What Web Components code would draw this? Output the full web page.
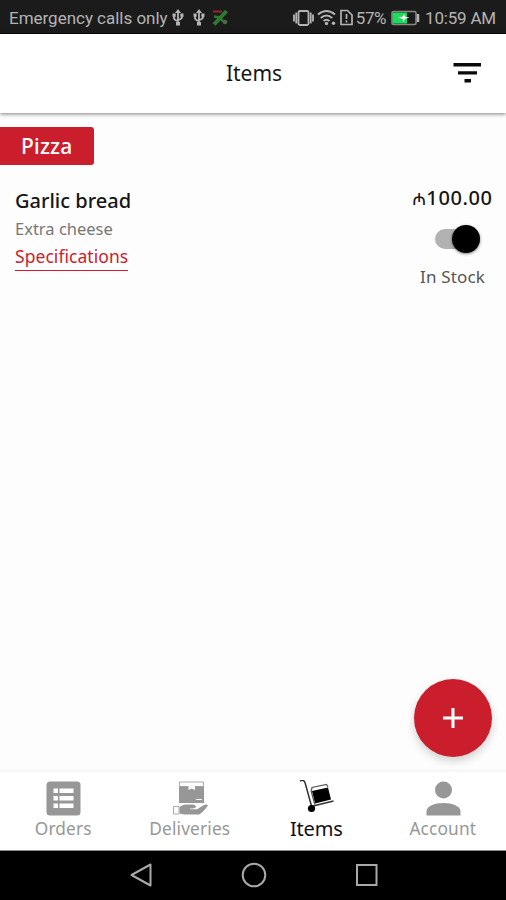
<!DOCTYPE html>
<html lang="en">
<head>
<meta charset="utf-8">
<title>Items</title>
<style>
	html, body{
		margin: 0;
		height: 100%;
	}
	body{
		overflow: hidden;
		background: #fdfdfd;
		font-family: "Noto Sans", "Open Sans", sans-serif;
	}
</style>
</head>
<body>
<items-app></items-app>
<script>
(function () {
	function define(name, html){
		const template = document.createElement("template");
		template.innerHTML = html;
		window.customElements.define(name, class extends HTMLElement{
			constructor(){
				super()
				this.attachShadow({ mode: "open" });
				this.shadowRoot.appendChild(template.content.cloneNode(true));
			}
		});
	}

	define("status-bar", `
		<style>
			:host{
				display: flex;
				align-items: center;
				justify-content: space-between;
				box-sizing: border-box;
				height: 34px;
				padding: 2px 10px 0 9px;
				background: #1b1b1b;
				border-bottom: 1px solid #050505;
				color: #b4b4b4;
				font: 17px/30px Roboto, sans-serif;
				white-space: nowrap;
			}
			div{
				display: flex;
				align-items: center;
			}
			svg{
				display: block;
				flex: none;
				fill: none;
				stroke: #b4b4b4;
			}
			.carrier{ letter-spacing: -0.02px; }
			.usb{ margin-left: 4px; }
			.usb + .usb{ margin-left: 9px; }
			.tool{ margin-left: 6px; }
			.percent{ margin: 0 5px 0 3px; letter-spacing: -0.4px; }
			.clock{ margin-left: 5px; letter-spacing: -0.2px; }
		</style>
		<div>
			<span class="carrier">Emergency calls only</span>
			<svg class="usb" width="12" height="17" viewBox="0 0 12 17" stroke-width="1.8"><path d="M6 2v13M2 6v3q0 2 4 3M10 6v2q0 2-4 3"/><path d="M6 0l3 4H3zM0.500 4.500h3.200v3.300H0.500zM8.300 4.500h3.200v3.300H8.300zM4 13h4v3.500H4z" fill="#b4b4b4" stroke="none"/></svg>
			<svg class="usb" width="12" height="17" viewBox="0 0 12 17" stroke-width="1.8"><path d="M6 2v13M2 6v3q0 2 4 3M10 6v2q0 2-4 3"/><path d="M6 0l3 4H3zM0.500 4.500h3.200v3.300H0.500zM8.300 4.500h3.200v3.300H8.300zM4 13h4v3.500H4z" fill="#b4b4b4" stroke="none"/></svg>
			<svg class="tool" width="18" height="18" viewBox="0 0 18 18"><path d="M2 2.500h9" stroke="#8e2424" stroke-width="2.200"/><path d="M15.500 2L3 15.500" stroke="#2f7a32" stroke-width="4"/><path d="M3 7.500l6 1 3 4" stroke="#2f7a32" stroke-width="2.500"/><circle cx="14" cy="13" r="2.300" fill="#4c6a4a" stroke="none"/></svg>
		</div>
		<div>
			<svg width="21" height="18" viewBox="0 0 21 18" stroke-width="1.800"><rect x="5.500" y="2" width="10" height="14" rx="1.500"/><path d="M1 5.500v7M3.300 3.500v11M17.700 3.500v11M20 5.500v7"/></svg>
			<svg style="margin-left:3px" width="20" height="17" viewBox="0 0 20 17" stroke-width="2"><path d="M1 5.500q8.500-7 17 0M3.800 9q5.700-5 11.400 0M6.500 12q3-2.500 6 0"/><circle cx="9.500" cy="14.500" r="1.700" fill="#b4b4b4" stroke="none"/><circle cx="16.500" cy="14.300" r="1.700" fill="#b4b4b4" stroke="none"/></svg>
			<svg style="margin-left:3px" width="13" height="17" viewBox="0 0 13 17" stroke-width="1.700"><path d="M1 1.500h6.500l4.500 4.500v9.500H1zM6.500 5v5M6.500 11.500v2"/></svg>
			<span class="percent">57%</span>
			<svg width="29" height="16" viewBox="0 0 29 16"><rect x="1" y="1.500" width="24" height="13" rx="1.500" stroke="#888" stroke-width="1.600"/><path d="M1.500 2.500H16v11H1.500z" fill="#20d95c" stroke="none"/><path d="M27 4v8" stroke-width="2.500"/><path d="M7 7.500l4.500-.8L13 4l1.200 2.700 4.300 1.100-4.500 1L12.500 12l-1-3.200z" fill="#fff" stroke="none"/></svg>
			<span class="clock">10:59 AM</span>
		</div>
	`);

	define("app-header", `
		<style>
			:host{
				display: grid;
				grid-template-columns: 1fr auto 1fr;
				align-items: center;
				box-sizing: border-box;
				height: 79px;
				padding: 0 24px 2px 26px;
				background: #fff;
				box-shadow: 0 1px 4px rgba(0, 0, 0, 0.5);
				color: #161616;
				font-size: 21px;
				line-height: 30px;
				z-index: 1;
			}
			.title{ grid-column: 2; }
			svg{
				display: block;
				justify-self: end;
			}
		</style>
		<span class="title"><slot></slot></span>
		<svg width="29" height="20" viewBox="0 0 29 20"><path d="M0.500 0h27.500v3.500H0.500zM5 8.300h19v3.200H5zM11.500 16h6.500v3.500h-6.500z" fill="#0a0a0a"/></svg>
	`);

	define("category-tag", `
		<style>
			:host{
				display: block;
				box-sizing: border-box;
				width: 94px;
				height: 38px;
				padding-left: 21px;
				background: #cb1e2d;
				border-radius: 0 3px 3px 0;
				color: #fff;
				font-size: 21px;
				font-weight: 500;
				line-height: 38px;
				letter-spacing: 0.2px;
			}
		</style>
		<slot></slot>
	`);

	define("stock-switch", `
		<style>
			:host{
				display: flex;
				align-items: center;
				justify-content: flex-end;
				box-sizing: border-box;
				width: 45px;
				height: 20px;
				border-radius: 10px;
				background: #b2b2b2;
			}
			span{
				width: 28px;
				height: 28px;
				flex: none;
				border-radius: 50%;
				background: #000;
				box-shadow: 0 1px 3px rgba(0, 0, 0, 0.5);
			}
		</style>
		<span></span>
	`);

	define("menu-item", `
		<style>
			:host{
				display: flex;
				justify-content: space-between;
				padding: 18px 14px 0 15px;
			}
			.info, .side{
				display: flex;
				flex-direction: column;
				align-items: flex-start;
			}
			.name{
				margin-top: 4px;
				color: #161616;
				font-size: 20px;
				font-weight: 500;
				line-height: 28px;
			}
			.note{
				margin-top: 1px;
				color: #777;
				font-size: 16.5px;
				line-height: 26px;
			}
			.specs{
				height: 26px;
				margin-top: 2px;
				border-bottom: 1px solid #cb1e2d;
				color: #cb1e2d;
				font-size: 17.5px;
				line-height: 24px;
				letter-spacing: 0.05px;
			}
			.side{ align-items: flex-end; }
			.price{
				margin-top: 1px;
				color: #161616;
				font-size: 20px;
				font-weight: 500;
				line-height: 28px;
				letter-spacing: 0.6px;
				margin-right: -0.6px;
			}
			.price small{ font-size: 16px; }
			stock-switch{ margin: 16px 12px 0 0; }
			.stock{
				margin: 15px 7px 0 0;
				color: #555;
				font-size: 17px;
				line-height: 26px;
				letter-spacing: 0.15px;
			}
		</style>
		<div class="info">
			<span class="name"><slot name="name"></slot></span>
			<span class="note"><slot name="note"></slot></span>
			<span class="specs">Specifications</span>
		</div>
		<div class="side">
			<span class="price"><small>₼</small><slot name="price"></slot></span>
			<stock-switch></stock-switch>
			<span class="stock">In Stock</span>
		</div>
	`);

	define("add-button", `
		<style>
			:host{
				display: flex;
				align-items: center;
				justify-content: center;
				width: 78px;
				height: 78px;
				border-radius: 50%;
				background: #cb1e2d;
				box-shadow: 0 4px 9px rgba(0, 0, 0, 0.18);
			}
		</style>
		<svg width="20" height="20" viewBox="0 0 20 20"><path d="M10 0v20M0 10h20" stroke="#fff" stroke-width="3"/></svg>
	`);

	define("nav-tab", `
		<style>
			:host{
				display: flex;
				flex: 1 1 0;
				flex-direction: column;
				align-items: center;
				color: #979797;
				font-size: 17.3px;
				line-height: 26px;
				letter-spacing: 0.15px;
			}
			:host([active]){
				color: #111;
				font-size: 20px;
				letter-spacing: -0.2px;
			}
			.icon{
				height: 36px;
				margin-top: 8px;
			}
		</style>
		<span class="icon"><slot name="icon"></slot></span>
		<span class="label"><slot></slot></span>
	`);

	define("tab-bar", `
		<style>
			:host{
				display: flex;
				box-sizing: border-box;
				height: 82px;
				background: #fff;
				border-top: 3px solid #f7f7f7;
				border-bottom: 1px solid #8a8a8a;
			}
			svg{ display: block; }
		</style>
		<nav-tab>
			<svg slot="icon" width="36" height="36" viewBox="0 0 36 36"><rect x="1.500" y="1.500" width="34" height="34" rx="3.500" fill="#979797"/><path d="M8.500 8.500h4.500v4.500H8.500zM14.500 8.500h14v4.500h-14zM8.500 16h4.500v4.500H8.500zM14.500 16h14v4.500h-14zM8.500 23.500h4.500V28H8.500zM14.500 23.500h14V28h-14z" fill="#fff"/></svg>
			Orders
		</nav-tab>
		<nav-tab>
			<svg slot="icon" width="36" height="36" viewBox="0 0 36 36"><path d="M7.500 2h24v4.500h-24z" fill="#fff" stroke="#aaa"/><path d="M7 6.500h25V23H7z" fill="#979797"/><path d="M16.500 6h6.500v4l-3.200-1.500-3.300 1.500z" fill="#fff"/><path d="M24 19.500h6" stroke="#fff"/><path d="M1.500 26.500h5.500v7.500H1.500z" fill="#fff" stroke="#aaa"/><path d="M7.500 27q3-2.500 6-2.500h7q3 0 3.500 2.500-1 1.500-6 1.500v.7h7l7-4.200q3-1 4 .5-5 7-9 9H12l-4.500-1z" fill="#979797"/></svg>
			Deliveries
		</nav-tab>
		<nav-tab active>
			<svg slot="icon" width="36" height="36" viewBox="0 0 36 36"><path d="M2 1.200Q5.500-1 7 2.500L13.500 26M15 26l20.500-5" fill="none" stroke="#333" stroke-width="1.500"/><path d="M14 11L30 7.500 33 19.500 17 23.500z" fill="#000"/><path d="M13.300 10.500l.7-3 14.500-3 1.500 2.500M13 10.500l3.800 14" fill="none" stroke="#555" stroke-width="1.200"/><circle cx="13.500" cy="28.500" r="3.600" fill="#000"/></svg>
			Items
		</nav-tab>
		<nav-tab>
			<svg slot="icon" width="36" height="36" viewBox="0 0 36 36"><circle cx="18.500" cy="10" r="8.500" fill="#979797"/><path d="M1.500 35.500v-4c0-5.500 8-8.500 17-8.500s17 3 17 8.500v4z" fill="#979797"/></svg>
			Account
		</nav-tab>
	`);

	define("system-nav", `
		<style>
			:host{
				display: flex;
				align-items: center;
				justify-content: center;
				gap: 88px;
				height: 49px;
				padding-left: 1px;
				background: #000;
			}
			svg{
				position: relative;
				top: -1px;
				fill: none;
				stroke: #a9a9a9;
				stroke-width: 2;
			}
		</style>
		<svg width="24" height="24" viewBox="0 0 24 24"><path d="M21.500 1.500v21L2.500 12z" stroke-linejoin="round"/></svg>
		<svg width="26" height="26" viewBox="0 0 26 26"><circle cx="13" cy="13" r="11.300"/></svg>
		<svg width="24" height="24" viewBox="0 0 24 24"><rect x="2" y="2" width="19.500" height="20"/></svg>
	`);

	define("items-app", `
		<style>
			:host{
				display: flex;
				flex-direction: column;
				height: 900px;
				width: 506px;
			}
			main{
				flex: 1;
				position: relative;
				padding-top: 14px;
			}
			/* floats over the list, above the tab bar */
			add-button{
				position: absolute;
				right: 14px;
				bottom: 12px;
			}
			system-nav{ box-sizing: border-box; }
		</style>
		<status-bar></status-bar>
		<app-header>Items</app-header>
		<main>
			<category-tag>Pizza</category-tag>
			<menu-item>
				<span slot="name">Garlic bread</span>
				<span slot="note">Extra cheese</span>
				<span slot="price">100.00</span>
			</menu-item>
			<add-button></add-button>
		</main>
		<tab-bar></tab-bar>
		<system-nav></system-nav>
	`);
}
)();
</script>
</body>
</html>
